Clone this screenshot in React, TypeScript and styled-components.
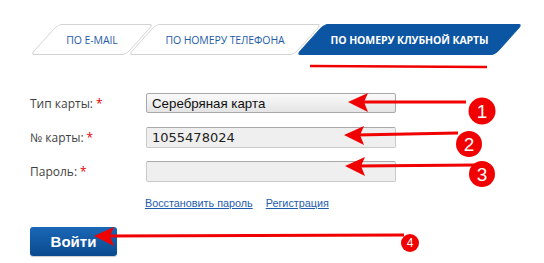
import React from "react";
import styled, { createGlobalStyle } from "styled-components";

const Global = createGlobalStyle`
  html, body { margin: 0; padding: 0; background: #fff; }
  body { width: 544px; height: 263px; overflow: hidden; }
`;

const Page = styled.div`
  position: relative;
  width: 544px;
  height: 263px;
  padding: 24px 0 0 30px;
  box-sizing: border-box;
  font-family: "Open Sans", "Liberation Sans", sans-serif;
`;

const Tabs = styled.div`
  display: flex;
  gap: 2px;
  margin-left: 14px;
  height: 31px;
`;

const Tab = styled.div<{ $w: number; $active?: boolean }>`
  position: relative;
  width: ${(p) => p.$w}px;
  height: 31px;
  display: flex;
  align-items: center;
  justify-content: center;
  font-size: 10.5px;
  font-weight: ${(p) => (p.$active ? 700 : 400)};
  letter-spacing: -0.1px;
  color: ${(p) => (p.$active ? "#fff" : "#1f5ca8")};
  text-transform: uppercase;
  white-space: nowrap;
  z-index: 0;
  &::before {
    content: "";
    position: absolute;
    inset: 0;
    transform: skewX(-42deg);
    border: 1px solid ${(p) => (p.$active ? "#0b55a3" : "#d3d3d3")};
    background: ${(p) => (p.$active ? "#0b55a3" : "#fff")};
    border-radius: 4px;
    z-index: -1;
  }
`;

const Form = styled.div`
  display: grid;
  grid-template-columns: 116px 250px;
  grid-auto-rows: 34px;
  align-items: center;
  margin-top: 31px;
`;

const Label = styled.div`
  font-size: 12px;
  color: #3f3f3f;
`;

const Star = styled.span`
  color: #e20000;
  margin-left: 3px;
`;

const Select = styled.div`
  position: relative;
  height: 20px;
  box-sizing: border-box;
  border: 1px solid #a8a8a8;
  border-radius: 2px;
  background: linear-gradient(#fafafa, #e4e4e4);
  display: flex;
  align-items: center;
  padding-left: 5px;
  font-family: "Liberation Sans", Arial, sans-serif;
  font-size: 13.3px;
  color: #111;
`;

const Caret = styled.span`
  position: absolute;
  right: 7px;
  top: 7px;
  width: 4px;
  height: 2px;
  background: #222;
`;

const Input = styled.div`
  height: 21px;
  box-sizing: border-box;
  border: 1px solid #c9c9c9;
  border-top-color: #a9a9a9;
  border-radius: 2px;
  background: #efefef;
  display: flex;
  align-items: center;
  padding-left: 5px;
  font-family: "DejaVu Sans", Verdana, sans-serif;
  font-size: 13px;
  color: #222;
`;

const Links = styled.div`
  grid-column: 2;
  display: flex;
  gap: 13px;
  margin-top: -4px;
  margin-left: -1px;
`;

const Link = styled.a`
  font-family: "Liberation Sans", Arial, sans-serif;
  font-size: 10.8px;
  color: #1d5cad;
  text-decoration: underline;
`;

const Button = styled.button`
  margin-top: 5px;
  width: 87px;
  height: 29px;
  border: none;
  border-radius: 3px;
  background: linear-gradient(#1b67b6, #0a4a8e);
  color: #fff;
  font-family: "Liberation Sans", Arial, sans-serif;
  font-weight: 700;
  font-size: 15px;
  padding: 0;
  box-shadow: 0 1px 1px rgba(0, 0, 0, 0.2);
`;

const Overlay = styled.svg`
  position: absolute;
  left: 0;
  top: 0;
  pointer-events: none;
`;

const Badge = ({ cx, cy, r, n, fs }: { cx: number; cy: number; r: number; n: string; fs: number }) => (
  <g>
    <circle cx={cx} cy={cy} r={r} fill="#f00000" />
    <text
      x={cx}
      y={cy + fs * 0.36}
      textAnchor="middle"
      fill="#fff"
      fontSize={fs}
      fontFamily="'Liberation Sans', Arial, sans-serif"
    >
      {n}
    </text>
  </g>
);

const Arrow = ({ x1, y1, x2, y2 }: { x1: number; y1: number; x2: number; y2: number }) => (
  <g>
    <line x1={x1 + 12} y1={y1} x2={x2} y2={y2} stroke="#f00000" strokeWidth={3} />
    <polygon
      points={`${x1},${y1} ${x1 + 20},${y1 - 9} ${x1 + 16},${y1} ${x1 + 20},${y1 + 10}`}
      fill="#f00000"
    />
  </g>
);

export default function App() {
  return (
    <>
      <Global />
      <Page>
        <Tabs>
          <Tab $w={96}>по e-mail</Tab>
          <Tab $w={166}>по номеру телефона</Tab>
          <Tab $w={199} $active>
            по номеру клубной карты
          </Tab>
        </Tabs>
        <Form>
          <Label>
            Тип карты:<Star>*</Star>
          </Label>
          <Select>
            Серебряная карта
            <Caret />
          </Select>
          <Label>
            № карты:<Star>*</Star>
          </Label>
          <Input>1055478024</Input>
          <Label>
            Пароль:<Star>*</Star>
          </Label>
          <Input />
          <Links>
            <Link href="#">Восстановить пароль</Link>
            <Link href="#">Регистрация</Link>
          </Links>
        </Form>
        <Button>Войти</Button>
        <Overlay width={544} height={263} viewBox="0 0 544 263">
          <line x1={310} y1={66} x2={487} y2={67} stroke="#f00000" strokeWidth={2.5} />
          <Arrow x1={348} y1={102} x2={466} y2={102} />
          <Arrow x1={344} y1={135} x2={458} y2={133} />
          <Arrow x1={345} y1={166} x2={476} y2={165} />
          <Arrow x1={94} y1={236} x2={404} y2={235} />
          <Badge cx={482} cy={111} r={13.5} n="1" fs={19} />
          <Badge cx={469} cy={144} r={13} n="2" fs={19} />
          <Badge cx={482} cy={174} r={13} n="3" fs={19} />
          <Badge cx={410} cy={243} r={9} n="4" fs={12} />
        </Overlay>
      </Page>
    </>
  );
}
